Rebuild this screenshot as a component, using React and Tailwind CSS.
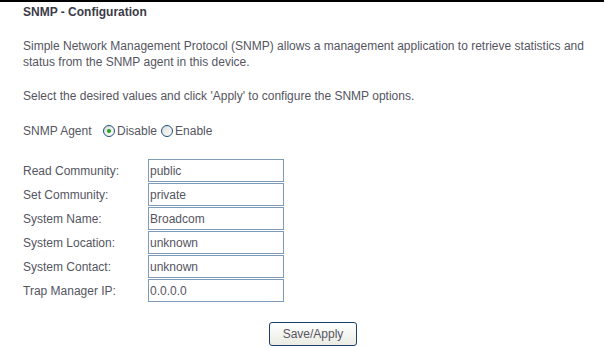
import React, { useState } from "react";

const fields = [
  { label: "Read Community:", value: "public" },
  { label: "Set Community:", value: "private" },
  { label: "System Name:", value: "Broadcom" },
  { label: "System Location:", value: "unknown" },
  { label: "System Contact:", value: "unknown" },
  { label: "Trap Manager IP:", value: "0.0.0.0" },
];

const Radio = ({ checked, onClick, label }) => (
  <label className="flex items-center cursor-pointer" onClick={onClick}>
    <span className="w-[12px] h-[12px] rounded-full border border-[#1c5180] bg-gradient-to-br from-[#dcdcd6] to-white flex items-center justify-center">
      {checked && <span className="w-[4px] h-[4px] rounded-full bg-[#21a121]" />}
    </span>
    <span className="ml-[2px]">{label}</span>
  </label>
);

const App = () => {
  const [agent, setAgent] = useState("disable");
  const [values, setValues] = useState(fields.map((f) => f.value));

  return (
    <div
      className="w-[604px] h-[348px] bg-white border-t-2 border-black text-[12px] leading-[16px] text-[#55555f]"
      style={{ fontFamily: '"Liberation Sans", Arial, sans-serif' }}
    >
      <div className="pl-[23px] pt-[2px]">
        <h1 className="font-bold text-[#3a3a48]">SNMP - Configuration</h1>

        <p className="mt-[18px] w-[575px]">
          Simple Network Management Protocol (SNMP) allows a management application to retrieve statistics and
          status from the SNMP agent in this device.
        </p>

        <p className="mt-[18px]">Select the desired values and click 'Apply' to configure the SNMP options.</p>

        <div className="mt-[19px] flex items-center">
          <span className="w-[80px]">SNMP Agent</span>
          <div className="flex items-center gap-[4px]">
            <Radio checked={agent === "disable"} onClick={() => setAgent("disable")} label="Disable" />
            <Radio checked={agent === "enable"} onClick={() => setAgent("enable")} label="Enable" />
          </div>
        </div>

        <div className="mt-[20px] flex flex-col gap-[1px]">
          {fields.map((f, i) => (
            <div key={f.label} className="flex items-center">
              <span className="w-[125px]">{f.label}</span>
              <input
                type="text"
                value={values[i]}
                onChange={(e) => {
                  const next = [...values];
                  next[i] = e.target.value;
                  setValues(next);
                }}
                className="w-[136px] h-[23px] border border-[#7f9db9] px-[1px] text-[12px] text-[#55555f] outline-none"
                style={{ fontFamily: '"Liberation Sans", Arial, sans-serif' }}
              />
            </div>
          ))}
        </div>

        <div className="mt-[20px] pl-[246px]">
          <button className="w-[88px] h-[24px] rounded-[3px] border border-[#1c3f6e] bg-gradient-to-b from-white to-[#ebebe4] text-[12px] text-[#55555f]">
            Save/Apply
          </button>
        </div>
      </div>
    </div>
  );
};

export default App;
